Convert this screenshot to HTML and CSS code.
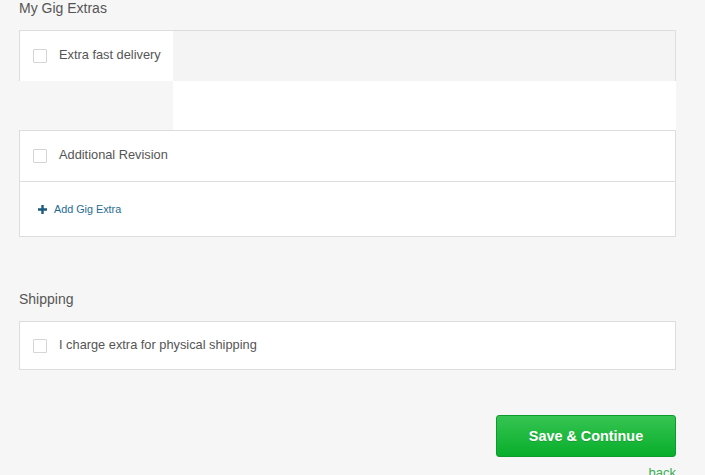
FILE: index.html
```html
<!DOCTYPE html>
<html lang="en">
<head>
    <meta charset="UTF-8">
    <meta name="viewport" content="width=device-width, initial-scale=1.0">
    <title>Gig Extras</title>
    <link rel="stylesheet" href="styles.css">
</head>
<body>
    <div class="page">
        <h2 class="section-title">My Gig Extras</h2>

        <div class="extras-top">
            <div class="cell cell-first">
                <label class="check-row">
                    <span class="checkbox"></span>
                    <span class="check-label">Extra fast delivery</span>
                </label>
            </div>
            <div class="cell cell-gray"></div>
            <div class="cell cell-empty"></div>
            <div class="cell cell-white"></div>
        </div>

        <div class="box">
            <div class="row">
                <label class="check-row">
                    <span class="checkbox"></span>
                    <span class="check-label">Additional Revision</span>
                </label>
            </div>
            <div class="row row-add">
                <a href="#" class="add-link">
                    <svg class="plus" width="9" height="9" viewBox="0 0 9 9"><path d="M3.3 0h2.4v3.3H9v2.4H5.7V9H3.3V5.7H0V3.3h3.3z" fill="#1d5b7c"/></svg>
                    Add Gig Extra
                </a>
            </div>
        </div>

        <h2 class="section-title shipping-title">Shipping</h2>
        <div class="box">
            <div class="row row-ship">
                <label class="check-row">
                    <span class="checkbox"></span>
                    <span class="check-label">I charge extra for physical shipping</span>
                </label>
            </div>
        </div>

        <div class="actions">
            <button class="btn-save">Save &amp; Continue</button>
            <a href="#" class="back-link">back</a>
        </div>
    </div>
</body>
</html>
```

FILE: styles.css
```css
body {
    margin: 0;
    background-color: #f6f6f6;
    font-family: "Liberation Sans", Arial, sans-serif;
    color: #555;
    overflow: hidden;
}
.page {
    width: 657px;
    padding: 0 19px;
}
.section-title {
    margin: 0 0 14px;
    font-size: 14px;
    line-height: 16px;
    font-weight: normal;
    color: #555;
}
.shipping-title {
    margin-top: 54px;
    margin-bottom: 14px;
}
.extras-top {
    display: grid;
    grid-template-columns: 154px 1fr;
    grid-template-rows: 51px 49px;
}
.cell-first {
    background-color: #fff;
    border-top: 1px solid #ddd;
    border-left: 1px solid #ddd;
    padding-left: 13px;
    display: flex;
    align-items: center;
}
.cell-gray {
    background-color: #f4f4f4;
    border-top: 1px solid #ddd;
    border-right: 1px solid #ddd;
}
.cell-white {
    background-color: #fff;
}
.box {
    background-color: #fff;
    border: 1px solid #ddd;
}
.row {
    height: 50px;
    padding-left: 13px;
    display: flex;
    align-items: center;
    border-bottom: 1px solid #ddd;
}
.row:last-child {
    border-bottom: none;
}
.row-add {
    height: 54px;
    padding-left: 18px;
}
.row-ship {
    height: 47px;
}
.check-row {
    display: flex;
    align-items: center;
    gap: 12px;
    font-size: 12.8px;
    color: #555;
    cursor: pointer;
}
.check-label {
    margin-bottom: 3px;
}
.checkbox {
    width: 12px;
    height: 12px;
    border: 1px solid #d6d6d6;
    background-color: #fff;
    border-radius: 1px;
}
.add-link {
    display: flex;
    align-items: center;
    gap: 7px;
    font-size: 10.8px;
    color: #1f6c93;
    text-decoration: none;
}
.plus {
    display: block;
}
.actions {
    margin-top: 45px;
    display: flex;
    flex-direction: column;
    align-items: flex-end;
}
.btn-save {
    width: 180px;
    height: 42px;
    border: 1px solid #0d9b2c;
    border-radius: 3px;
    background: linear-gradient(#36c452, #08ae2b);
    color: #fff;
    font-family: "Liberation Sans", Arial, sans-serif;
    font-size: 14.4px;
    font-weight: bold;
    text-shadow: 0 1px 0 rgba(0, 0, 0, 0.15);
    cursor: pointer;
}
.back-link {
    margin-top: 8px;
    font-size: 13px;
    line-height: 15px;
    color: #3bae55;
    text-decoration: none;
}
```
